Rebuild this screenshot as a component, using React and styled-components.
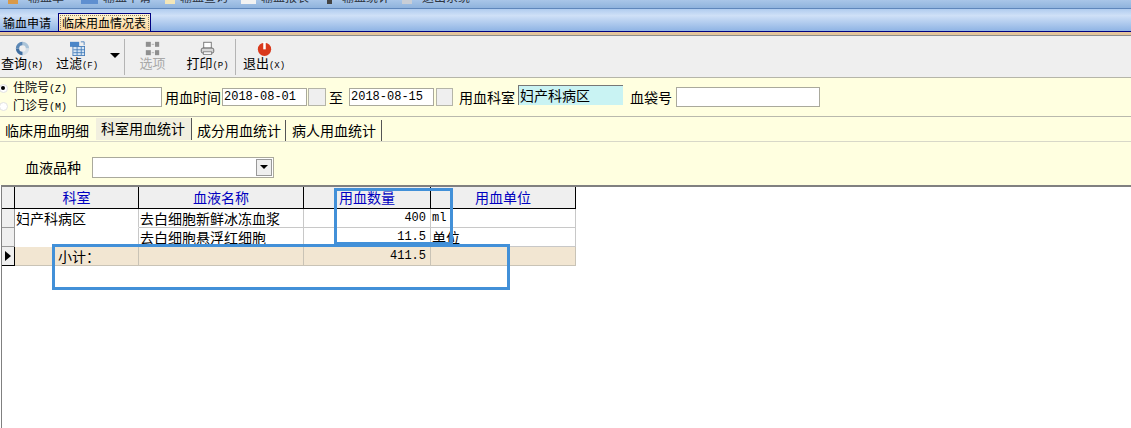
import React from 'react'
import styled, { createGlobalStyle } from 'styled-components'

const GlobalStyle = createGlobalStyle`
  html, body { margin: 0; padding: 0; background: #fff; }
  body {
    font-family: "Noto Sans CJK SC", "Liberation Sans", sans-serif;
    font-size: 14px;
    color: #000;
    overflow: hidden;
  }
`

const Page = styled.div`
  position: relative;
  width: 1131px;
  height: 428px;
  overflow: hidden;
  background: #fff;
  display: flex;
  flex-direction: column;
`

const TopStrip = styled.div`
  height: 8px;
  background: linear-gradient(#a9c6e8, #8fb3dd);
  border-bottom: 1px solid #5f87bb;
  display: flex;
  overflow: hidden;
`

const TopItem = styled.div`
  display: flex;
  margin-left: ${p => p.$ml}px;
  gap: ${p => p.$gap}px;
  height: 14px;
  margin-top: -10px;
  font-size: 12px;
  line-height: 14px;
  color: #2c3340;
  white-space: nowrap;
`

const TopIcon = styled.i`
  display: block;
  width: ${p => p.$w}px;
  height: 14px;
  background: ${p => p.$color};
`

const TabBar = styled.div`
  height: 22px;
  background: linear-gradient(#b0ccef, #cfe0f7 30%, #8fb4e4);
  border-bottom: 1px solid #000080;
  display: flex;
  align-items: flex-end;
  padding-left: 1px;
  gap: 5px;
`

const AppTab = styled.div`
  box-sizing: border-box;
  height: ${p => (p.$active ? 18 : 17)}px;
  line-height: 17px;
  font-size: 12px;
  padding: 0 ${p => (p.$active ? '4px 0 3px' : '2px')};
  ${p => p.$active && `
    position: relative;
    background: linear-gradient(#fff3cf, #fcd59c);
    border: 1px solid #000080;
    border-bottom: none;
    &:after {
      content: '';
      position: absolute;
      inset: 1px;
      border: 1px dotted #8a8266;
      border-bottom: none;
    }
  `}
`

const TanLine = styled.div`
  height: 3px;
  background: #e4c59c;
  border-bottom: 1px solid #8d8d8d;
`

const Toolbar = styled.div`
  height: 41px;
  background: #efefef;
  border-bottom: 1px solid #b5b5a8;
  display: flex;
  align-items: stretch;
`

const ToolButton = styled.div`
  width: ${p => p.$w}px;
  flex-shrink: 0;
  display: flex;
  flex-direction: column;
  align-items: center;
  padding-top: 5px;
  font-size: 13px;
  line-height: 12px;
  white-space: nowrap;
  color: ${p => (p.$disabled ? '#a8a8a8' : '#000')};
  svg { display: block; width: 15px; height: 15px; margin-bottom: 1px; }
`

const Accel = styled.span`
  font-family: "Liberation Mono", monospace;
  font-size: ${p => p.$fs || 9}px;
`

const ToolSep = styled.div`
  width: 1px;
  margin: 3px ${p => p.$mr || 0}px 2px 0;
  background: #b4b4b4;
`

const Caret = styled.div`
  width: 0;
  height: 0;
  margin: 17px 4px 0 0;
  border-left: 5px solid transparent;
  border-right: 5px solid transparent;
  border-top: 5px solid #000;
`

const Cream = styled.div`
  background: #ffffe0;
  display: flex;
  align-items: center;
  flex-shrink: 0;
`

const FilterRow = styled(Cream)`
  height: 38px;
  border-bottom: 1px solid #b9b9ad;
`

const RadioStack = styled.div`
  width: 76px;
  line-height: 15px;
`

const RadioLine = styled.div`
  display: flex;
  align-items: center;
  gap: 5px;
  margin-left: -1px;
  font-size: 12px;
  white-space: nowrap;
`

const Radio = styled.i`
  display: block;
  width: 7px;
  height: 7px;
  border-radius: 50%;
  background: #fff;
  border: 1px solid #e2e2e2;
  position: relative;
  ${p => p.$on && `
    &:after {
      content: '';
      position: absolute;
      left: 1px;
      top: 1px;
      width: 4px;
      height: 4px;
      border-radius: 50%;
      background: #000;
    }
  `}
`

const TextBox = styled.div`
  box-sizing: border-box;
  width: ${p => p.$w}px;
  height: ${p => p.$h || 20}px;
  background: #fff;
  border: 1px solid #aaa99c;
`

const DateBox = styled.div`
  box-sizing: border-box;
  width: 85px;
  height: 18px;
  background: #fff;
  border: 1px solid #aaa99c;
  font-family: "Liberation Mono", monospace;
  font-size: 12px;
  line-height: 16px;
  padding-left: 1px;
  white-space: nowrap;
  overflow: hidden;
`

const DeptBox = styled.div`
  box-sizing: border-box;
  width: 105px;
  height: 20px;
  margin-bottom: 4px;
  background: #c9f3f3;
  border-top: 1px solid #777;
  border-left: 1px solid #777;
  font-size: 14px;
  line-height: 18px;
  padding-left: 1px;
  white-space: nowrap;
`

const Label = styled.div`
  font-size: 14px;
  line-height: 19px;
  white-space: nowrap;
  margin: 0 ${p => p.$mr ?? 3}px 0 ${p => p.$ml ?? 3}px;
`

const SpinBox = styled.div`
  box-sizing: border-box;
  width: ${p => p.$w}px;
  height: 18px;
  margin-left: ${p => p.$ml}px;
  background: #efefef;
  border: 1px solid #b5b5a8;
`

const SubTabs = styled.div`
  height: 24px;
  background: #ffffe0;
  border-bottom: 1px solid #d8d8c8;
  display: flex;
  align-items: flex-end;
  padding-left: 5px;
  flex-shrink: 0;
`

const SubTab = styled.div`
  font-size: 14px;
  line-height: 20px;
  height: 21px;
  white-space: nowrap;
  padding: 0 ${p => p.$pr}px 0 ${p => p.$pl}px;
  background: ${p => (p.$active ? '#f1efdf' : 'transparent')};
  border-right: 1px solid ${p => (p.$noSep ? 'transparent' : '#555')};
  ${p => p.$active && 'height: 22px; margin-bottom: 1px;'}
`

const BloodRow = styled(Cream)`
  height: 36px;
  padding: 7px 0 0 25px;
  gap: 11px;
`

const Select = styled.div`
  box-sizing: border-box;
  width: 182px;
  height: 21px;
  background: #fff;
  border: 1px solid #aaa99c;
  display: flex;
  justify-content: flex-end;
  align-items: center;
  padding-right: 1px;
`

const SelectButton = styled.div`
  box-sizing: border-box;
  width: 16px;
  height: 17px;
  background: #efefef;
  border: 1px solid #999;
  display: flex;
  align-items: center;
  justify-content: center;
  &:after {
    content: '';
    border-left: 4px solid transparent;
    border-right: 4px solid transparent;
    border-top: 4px solid #000;
  }
`

const GridArea = styled.div`
  flex: 1;
  margin-left: 1px;
  border-top: 2px solid #808080;
  border-left: 1px solid #808080;
  background: #fff;
`

const Row = styled.div`
  display: grid;
  grid-template-columns: 13px 124px 165px 127px 145px;
  height: ${p => p.$h || 19}px;
  box-sizing: border-box;
  width: 574px;
  background: ${p => p.$bg || 'transparent'};
`

const Cell = styled.div`
  box-sizing: border-box;
  border-right: 1px solid ${p => p.$line || '#c8c8c8'};
  border-bottom: 1px solid ${p => p.$line || '#c8c8c8'};
  font-size: 14px;
  line-height: 18px;
  padding: 0 ${p => (p.$right ? 4 : 1)}px 0 ${p => p.$indent || (p.$right ? 4 : 1)}px;
  text-align: ${p => (p.$right ? 'right' : 'left')};
  white-space: nowrap;
  overflow: hidden;
  ${p => p.$mono && `font-family: "Liberation Mono", monospace; font-size: 12px; line-height: 19px;`}
  ${p => p.$noBottom && 'border-bottom-color: transparent;'}
`

const HeadCell = styled.div`
  box-sizing: border-box;
  background: #efefef;
  border-right: 1px solid #000;
  border-bottom: 1px solid #000;
  color: #0000c0;
  text-align: center;
  font-size: 14px;
  line-height: 21px;
`

const Indicator = styled.div`
  box-sizing: border-box;
  background: #efefef;
  border-right: 1px solid ${p => p.$dark ? '#000' : '#999'};
  border-bottom: 1px solid ${p => p.$dark ? '#000' : '#999'};
  display: flex;
  align-items: center;
  justify-content: center;
  ${p => p.$arrow && `
    &:after {
      content: '';
      border-top: 5px solid transparent;
      border-bottom: 5px solid transparent;
      border-left: 6px solid #000;
    }
  `}
`

const Highlight = styled.div`
  position: absolute;
  box-sizing: border-box;
  left: ${p => p.$x}px;
  top: ${p => p.$y}px;
  width: ${p => p.$w}px;
  height: ${p => p.$h}px;
  border: 3px solid #4290d8;
`

const QueryIcon = () => (
  <svg viewBox="0 0 18 18">
    <path d="M9 1a8 8 0 0 1 8 8h-4a4 4 0 0 0-4-4z" fill="#a9c3d8" />
    <path d="M17 9a8 8 0 0 1-8 8v-4a4 4 0 0 0 4-4z" fill="#d4dfe8" />
    <path d="M9 17a8 8 0 0 1-8-8h4a4 4 0 0 0 4 4z" fill="#3e6da0" />
    <path d="M1 9a8 8 0 0 1 8-8v4a4 4 0 0 0-4 4z" fill="#5b87b5" />
  </svg>
)

const FilterIcon = () => (
  <svg viewBox="0 0 18 18">
    <rect x="0" y="1" width="11" height="6" fill="#4a86c8" />
    <rect x="3.500" y="6.500" width="14" height="11" fill="#d8e6f4" stroke="#3f78b8" />
    <path d="M4 10.500h14M8.500 7v10M13.500 7v10M4 14h14" stroke="#3f78b8" />
    <path d="M13 1h4v4" fill="none" stroke="#3f78b8" />
  </svg>
)

const OptionIcon = () => (
  <svg viewBox="0 0 18 18">
    <rect x="1" y="1" width="6" height="6" fill="#8f8f8f" />
    <rect x="12" y="1" width="5" height="6" fill="#8f8f8f" />
    <rect x="1" y="11" width="6" height="6" fill="#8f8f8f" />
    <rect x="12" y="11" width="5" height="6" fill="#8f8f8f" />
    <path d="M8 4h3M8 14h3" stroke="#a8a8a8" />
  </svg>
)

const PrintIcon = () => (
  <svg viewBox="0 0 18 18">
    <rect x="4.500" y="1.500" width="9" height="7" fill="#fff" stroke="#666" />
    <rect x="1.500" y="8.500" width="15" height="6" rx="2" fill="#d8d8d8" stroke="#555" />
    <rect x="4" y="13" width="10" height="3" fill="#fff" stroke="#777" />
  </svg>
)

const ExitIcon = () => (
  <svg viewBox="0 0 18 18">
    <circle cx="9" cy="10" r="8" fill="#d9391c" />
    <rect x="7.500" y="1" width="3" height="9" fill="#fff" />
  </svg>
)

const Tool = ({ icon, label, accel, w, disabled }) => (
  <ToolButton $w={w} $disabled={disabled}>
    {icon}
    <span>{label}{accel && <Accel>({accel})</Accel>}</span>
  </ToolButton>
)

const topItems = [
  { ml: 8, gap: 10, w: 10, color: '#d99a4a', text: '输血单' },
  { ml: 17, gap: 5, w: 17, color: '#5f8fd0', text: '输血申请' },
  { ml: 14, gap: 5, w: 10, color: '#f3e6b8', text: '输血查询' },
  { ml: 13, gap: 5, w: 15, color: '#f2f2f2', text: '输血报表' },
  { ml: 18, gap: 10, w: 5, color: '#444', text: '输血统计' },
  { ml: 12, gap: 10, w: 10, color: '#c9ced6', text: '退出系统' },
]

export default function App() {
  return (
    <Page>
      <GlobalStyle />
      <TopStrip>
        {topItems.map(item => (
          <TopItem key={item.text} $ml={item.ml} $gap={item.gap}>
            <TopIcon $w={item.w} $color={item.color} />
            {item.text}
          </TopItem>
        ))}
      </TopStrip>
      <TabBar>
        <AppTab>输血申请</AppTab>
        <AppTab $active>临床用血情况表</AppTab>
      </TabBar>
      <TanLine />
      <Toolbar>
        <Tool w={44} icon={<QueryIcon />} label="查询" accel="R" />
        <Tool w={66} icon={<FilterIcon />} label="过滤" accel="F" />
        <Caret />
        <ToolSep />
        <Tool w={55} icon={<OptionIcon />} label="选项" disabled />
        <Tool w={55} icon={<PrintIcon />} label="打印" accel="P" />
        <ToolSep />
        <Tool w={56} icon={<ExitIcon />} label="退出" accel="X" />
      </Toolbar>
      <FilterRow>
        <RadioStack>
          <RadioLine><Radio $on /><span>住院号<Accel $fs={10}>(Z)</Accel></span></RadioLine>
          <RadioLine><Radio /><span>门诊号<Accel $fs={10}>(M)</Accel></span></RadioLine>
        </RadioStack>
        <TextBox $w={86} />
        <Label $mr={1}>用血时间</Label>
        <DateBox>2018-08-01</DateBox>
        <SpinBox $w={18} $ml={1} />
        <Label $mr={6}>至</Label>
        <DateBox>2018-08-15</DateBox>
        <SpinBox $w={17} $ml={2} />
        <Label $ml={6}>用血科室</Label>
        <DeptBox>妇产科病区</DeptBox>
        <Label $ml={7} $mr={4}>血袋号</Label>
        <TextBox $w={144} />
      </FilterRow>
      <SubTabs>
        <SubTab $pl={0} $pr={6} $noSep>临床用血明细</SubTab>
        <SubTab $pl={5} $pr={6} $active>科室用血统计</SubTab>
        <SubTab $pl={5} $pr={4}>成分用血统计</SubTab>
        <SubTab $pl={6} $pr={5}>病人用血统计</SubTab>
      </SubTabs>
      <BloodRow>
        <Label $ml={0} $mr={0}>血液品种</Label>
        <Select><SelectButton /></Select>
      </BloodRow>
      <GridArea>
        <Row $h={22}>
          <Indicator $dark />
          <HeadCell>科室</HeadCell>
          <HeadCell>血液名称</HeadCell>
          <HeadCell>用血数量</HeadCell>
          <HeadCell>用血单位</HeadCell>
        </Row>
        <Row>
          <Indicator />
          <Cell $noBottom>妇产科病区</Cell>
          <Cell>去白细胞新鲜冰冻血浆</Cell>
          <Cell $right $mono>400</Cell>
          <Cell $mono>ml</Cell>
        </Row>
        <Row>
          <Indicator />
          <Cell $noBottom />
          <Cell>去白细胞悬浮红细胞</Cell>
          <Cell $right $mono>11.5</Cell>
          <Cell>单位</Cell>
        </Row>
        <Row $bg="#f2e6d2">
          <Indicator $dark $arrow />
          <Cell $line="#c9c3b6" $indent={43}>小计：</Cell>
          <Cell $line="#c9c3b6" />
          <Cell $line="#c9c3b6" $right $mono>411.5</Cell>
          <Cell $line="#c9c3b6" />
        </Row>
      </GridArea>
      <Highlight $x={334} $y={188} $w={119} $h={57} />
      <Highlight $x={52} $y={244} $w={458} $h={46} />
    </Page>
  )
}
